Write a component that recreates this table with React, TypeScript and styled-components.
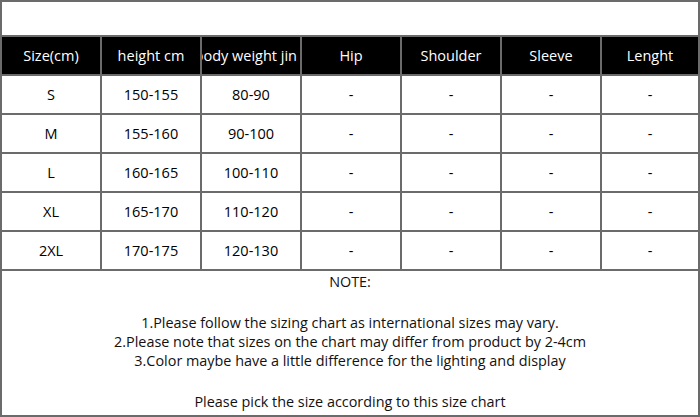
import React from 'react'
import styled, { createGlobalStyle } from 'styled-components'

const GlobalStyle = createGlobalStyle`
  html, body {
    margin: 0;
    padding: 0;
    background: #fff;
  }
  body {
    font-family: 'Open Sans', 'Noto Sans', sans-serif;
  }
`

//styling:
const Frame = styled.div`
  width: 700px;
  height: 417px;
  box-sizing: border-box;
  border: 2px solid #6b6b6b;
  display: flex;
  flex-direction: column;
  background: #fff;
`
const TopSpace = styled.div`
  height: 33px;
  border-bottom: 2px solid #6b6b6b;
`
const Grid = styled.div`
  display: grid;
  grid-template-columns: repeat(6, 100px) 96px;
  grid-auto-rows: 39px;
`
const Cell = styled.div<{ $head?: boolean; $last?: boolean; $tight?: boolean }>`
  box-sizing: border-box;
  border-bottom: 2px solid #6b6b6b;
  border-right: ${(p) => (p.$last ? 'none' : '2px solid #6b6b6b')};
  background: ${(p) => (p.$head ? '#000' : '#fff')};
  color: ${(p) => (p.$head ? '#fff' : '#000')};
  font-size: 14.5px;
  display: flex;
  align-items: center;
  justify-content: ${(p) => (p.$tight ? 'flex-end' : 'center')};
  padding-right: ${(p) => (p.$tight ? '3px' : '0')};
  white-space: nowrap;
  overflow: hidden;
  padding-bottom: 1px;
`
const Notes = styled.div`
  flex: 1;
  display: flex;
  flex-direction: column;
  align-items: center;
  color: #111;
  font-size: 14.4px;
  line-height: 19px;
  padding-top: 1px;
`
const NoteTitle = styled.div`
  margin-bottom: 22px;
`
const NoteList = styled.div`
  text-align: center;
  margin-bottom: 22px;
`
/////////

const headers = ['Size(cm)', 'height cm', 'body weight jin', 'Hip', 'Shoulder', 'Sleeve', 'Lenght']
const rows = [
  ['S', '150-155', '80-90'],
  ['M', '155-160', '90-100'],
  ['L', '160-165', '100-110'],
  ['XL', '165-170', '110-120'],
  ['2XL', '170-175', '120-130'],
]

export default function App() {
  return (
    <>
      <GlobalStyle />
      <Frame>
        <TopSpace />
        <Grid>
          {headers.map((h, i) => (
            // the weight header is too long for its cell, the original cuts its left side
            <Cell key={h} $head $last={i === 6} $tight={i === 2}>{h}</Cell>
          ))}
          {rows.map((r) =>
            [...r, '-', '-', '-', '-'].map((v, i) => (
              <Cell key={r[0] + i} $last={i === 6}>{v}</Cell>
            ))
          )}
        </Grid>
        <Notes>
          <NoteTitle>NOTE:</NoteTitle>
          <NoteList>
            <div>1.Please follow the sizing chart as international sizes may vary.</div>
            <div>2.Please note that sizes on the chart may differ from product by 2-4cm</div>
            <div>3.Color maybe have a little difference for the lighting and display</div>
          </NoteList>
          <div>Please pick the size according to this size chart</div>
        </Notes>
      </Frame>
    </>
  )
}
